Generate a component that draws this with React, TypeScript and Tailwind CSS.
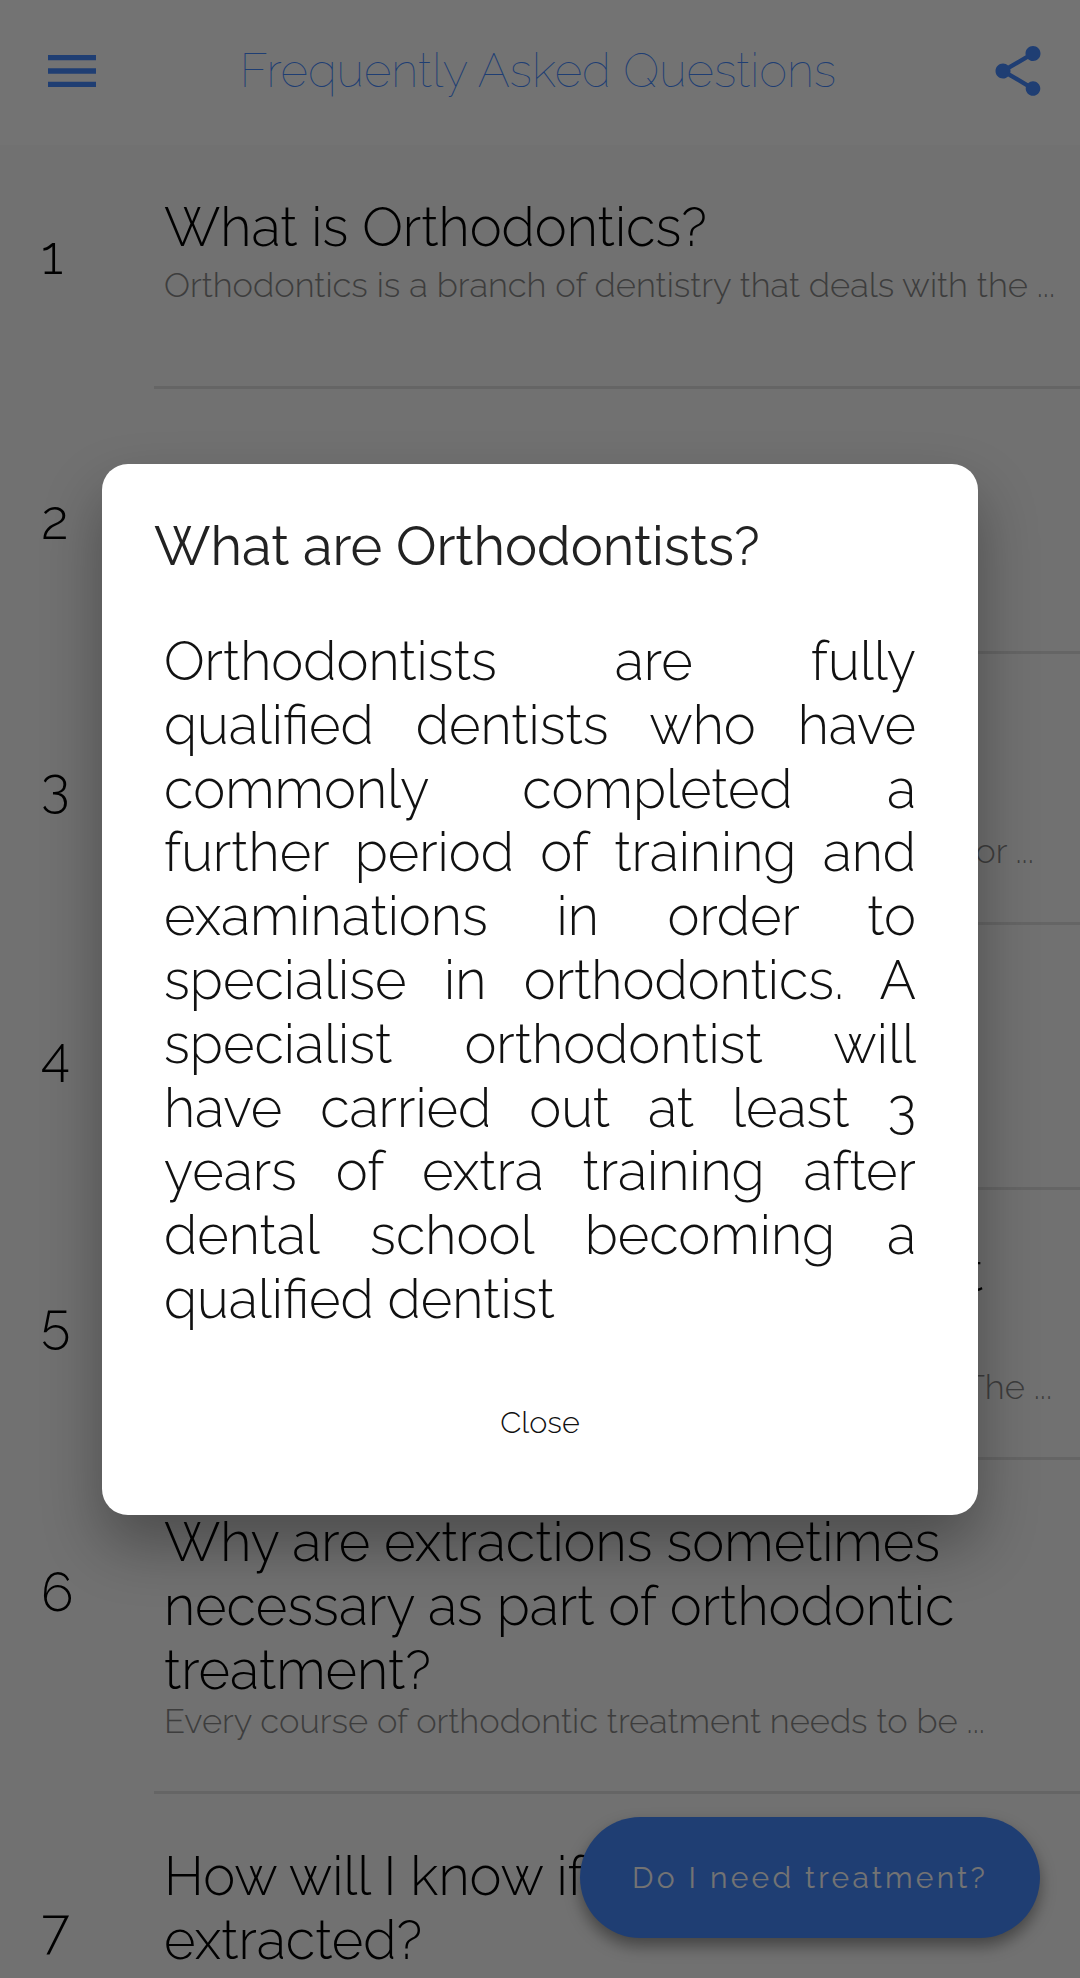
const rows = [
  { n: "1", rowH: "h-[244px]", numPt: "pt-[82px]", textPt: "pt-[50px]", subMt: "mt-[8px]", title: ["What is Orthodontics?"], sub: "Orthodontics is a branch of dentistry that deals with the ..." },
  { n: "2", rowH: "h-[265px]", numPt: "pt-[103px]", textPt: "pt-[85px]", subMt: "", title: ["What are Orthodontists?"], sub: "Orthodontists are fully qualified dentists ..." },
  { n: "3", rowH: "h-[271px]", numPt: "pt-[105px]", textPt: "pt-[50px]", subMt: "mt-[1px]", title: ["At what age should I see", "an orthodontist?"], sub: "Treatment is mostly carried out in young teen years or ..." },
  { n: "4", rowH: "h-[265px]", numPt: "pt-[103px]", textPt: "pt-[50px]", subMt: "", title: ["How long does treatment", "usually take?"], sub: "Most courses of treatment take between one ..." },
  { n: "5", rowH: "h-[270px]", numPt: "pt-[105px]", textPt: "pt-[50px]", subMt: "mt-[1px]", title: ["Which age is right for a treatment", "and how will it help?"], sub: "A straight grin may aid your confidence and health. The ..." },
  { n: "6", rowH: "h-[334px]", numPt: "pt-[104px]", textPt: "pt-[50px]", subMt: "mt-[1px]", title: ["Why are extractions sometimes", "necessary as part of orthodontic", "treatment?"], sub: "Every course of orthodontic treatment needs to be ..." },
  { n: "7", rowH: "h-[300px]", numPt: "pt-[106px]", textPt: "pt-[50px]", subMt: "", title: ["How will I know if teeth need to be", "extracted?"], sub: "" },
];

const body = [
  "Orthodontists are fully",
  "qualified dentists who have",
  "commonly completed a",
  "further period of training and",
  "examinations in order to",
  "specialise in orthodontics. A",
  "specialist orthodontist will",
  "have carried out at least 3",
  "years of extra training after",
  "dental school becoming a",
];

export default function App() {
  return (
    <div className="relative h-[1978px] w-full overflow-hidden bg-[#fafafa] font-['Raleway','Lato',sans-serif] font-light text-black">
      <header className="relative flex h-[145px] items-center justify-between bg-white pb-[3px] pl-[40px] pr-[32px]">
        <svg viewBox="0 0 24 24" className="h-16 w-16 fill-[#4589ff]">
          <path d="M3 18h18v-2H3v2zm0-5h18v-2H3v2zm0-7v2h18V6H3z" />
        </svg>
        <h1 className="mr-[16px] text-[47.5px] font-thin text-[#4589ff]">Frequently Asked Questions</h1>
        <svg viewBox="0 0 24 24" className="h-[60px] w-[60px] fill-[#4589ff]">
          <path d="M18 16.08c-.76 0-1.44.3-1.96.77L8.91 12.7c.05-.23.09-.46.09-.7s-.04-.47-.09-.7l7.05-4.11c.54.5 1.25.81 2.04.81 1.66 0 3-1.34 3-3s-1.34-3-3-3-3 1.34-3 3c0 .24.04.47.09.7L8.04 9.81C7.5 9.31 6.79 9 6 9c-1.66 0-3 1.34-3 3s1.34 3 3 3c.79 0 1.5-.31 2.04-.81l7.12 4.16c-.05.21-.08.43-.08.65 0 1.61 1.31 2.92 2.92 2.92s2.92-1.31 2.92-2.92-1.31-2.92-2.92-2.92z" />
        </svg>
      </header>

      <ul>
        {rows.map((row) => (
          <li key={row.n} className={`flex ${row.rowH}`}>
            <div className={`w-[154px] shrink-0 pl-[41px] text-[54px] leading-[56px] ${row.numPt}`}>{row.n}</div>
            <div className={`flex-1 border-b-[3px] border-[#e0e0e0] pl-[10px] ${row.textPt}`}>
              {row.title.map((line, i) => (
                <div key={i} className="h-16 whitespace-nowrap text-[54px] leading-[64px]">{line}</div>
              ))}
              <div className={`whitespace-nowrap text-[34.5px] leading-[36px] text-[#888] ${row.subMt}`}>{row.sub}</div>
            </div>
          </li>
        ))}
      </ul>

      <button className="absolute left-[580px] top-[1817px] flex h-[121px] w-[460px] items-center justify-center rounded-full bg-[#4589ff] text-[30px] font-normal tracking-[3.2px] text-white shadow-[0_8px_16px_rgba(0,0,0,0.4)]">
        Do I need treatment?
      </button>

      <div className="absolute inset-0 bg-black/55" />

      <div className="absolute left-[102px] top-[464px] h-[1051px] w-[876px] rounded-[26px] bg-white pl-[52px] pt-[50px] text-[#111] shadow-[0_30px_60px_rgba(0,0,0,0.32)]">
        <h2 className="text-[54px] font-normal leading-[64px] text-[#222]">What are Orthodontists?</h2>
        <div className="ml-[10px] mt-[52px] w-[752px] text-[54px] leading-[63.8px]">
          {body.map((line) => (
            <p key={line} className="[text-align-last:justify]">{line}</p>
          ))}
          <p>qualified dentist</p>
        </div>
        <div className="absolute inset-x-0 top-[940px] text-center text-[30.5px] leading-[36px]">Close</div>
      </div>
    </div>
  );
}
